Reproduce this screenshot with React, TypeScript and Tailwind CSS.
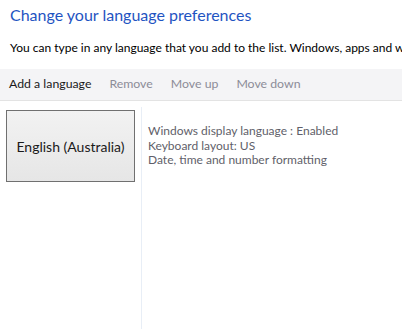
import React from 'react'

const font = { fontFamily: 'Lato, "Noto Sans", sans-serif' }

export default function App() {
  return (
    <div
      className="w-[402px] h-[329px] bg-white overflow-hidden flex flex-col text-[#000]"
      style={font}
    >
      {/* Heading */}
      <h1 className="pl-[10px] pt-[4px] text-[16px] leading-[21px] text-[#1f54c2] whitespace-nowrap">
        Change your language preferences
      </h1>
      <p className="pl-[10px] mt-[15px] text-[12px] leading-[16px] whitespace-nowrap">
        You can type in any language that you add to the list. Windows, apps and websites will appear in the first language in the list that supports them.
      </p>

      {/* Toolbar */}
      <div className="mt-[13px] h-[32px] bg-[#f4f4f6] border-b border-[#e3e3e3] flex items-center gap-[18px] pl-[9px] text-[12.3px] whitespace-nowrap">
        <span className="text-[#1a1a1a]">Add a language</span>
        <span className="text-[#8c8c98]">Remove</span>
        <span className="text-[#8c8c98]">Move up</span>
        <span className="text-[#8c8c98]">Move down</span>
      </div>

      {/* Language list */}
      <div className="flex flex-1 min-h-0">
        <div className="w-[141px] pl-[6px] pt-[9px] shrink-0">
          <button
            type="button"
            className="w-[129px] h-[72px] border border-[#707070] bg-gradient-to-b from-[#f2f2f2] to-[#e6e6e6] text-[14px] text-[#1a1a1a]"
          >
            English (Australia)
          </button>
        </div>
        <div className="flex-1 mt-[6px] border-l border-[#e8eef6] pl-[6px] pt-[17px] text-[12px] leading-[14.5px] text-[#5f5f6a] whitespace-nowrap">
          <div>Windows display language : Enabled</div>
          <div>Keyboard layout: US</div>
          <div>Date, time and number formatting</div>
        </div>
      </div>
    </div>
  )
}
